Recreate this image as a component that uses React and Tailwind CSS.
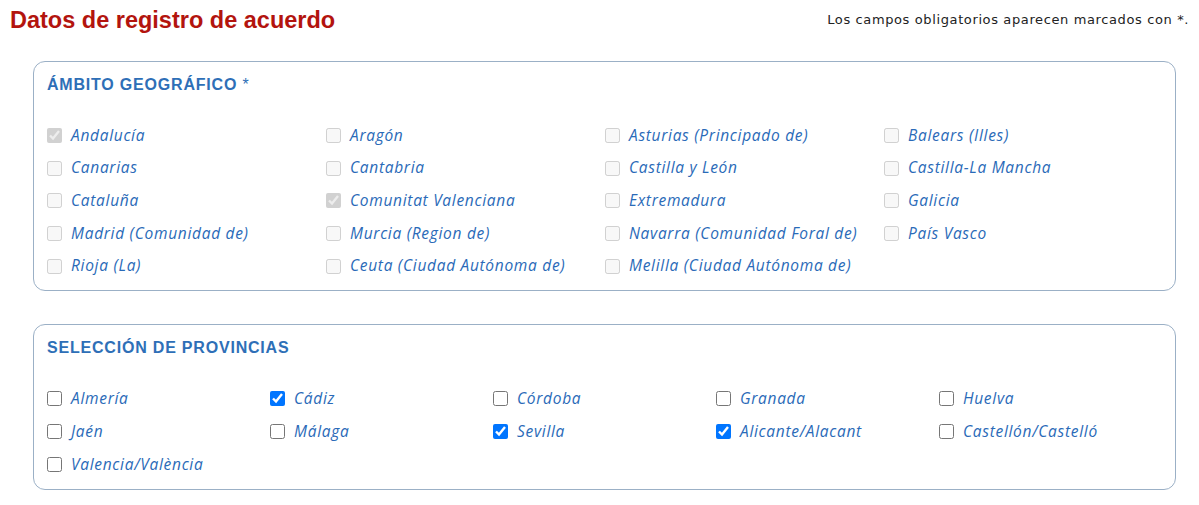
const comunidades = [
  { name: 'Andalucía', checked: true },
  { name: 'Aragón' },
  { name: 'Asturias (Principado de)' },
  { name: 'Balears (Illes)' },
  { name: 'Canarias' },
  { name: 'Cantabria' },
  { name: 'Castilla y León' },
  { name: 'Castilla-La Mancha' },
  { name: 'Cataluña' },
  { name: 'Comunitat Valenciana', checked: true },
  { name: 'Extremadura' },
  { name: 'Galicia' },
  { name: 'Madrid (Comunidad de)' },
  { name: 'Murcia (Region de)' },
  { name: 'Navarra (Comunidad Foral de)' },
  { name: 'País Vasco' },
  { name: 'Rioja (La)' },
  { name: 'Ceuta (Ciudad Autónoma de)' },
  { name: 'Melilla (Ciudad Autónoma de)' },
];

const provincias = [
  { name: 'Almería' },
  { name: 'Cádiz', checked: true },
  { name: 'Córdoba' },
  { name: 'Granada' },
  { name: 'Huelva' },
  { name: 'Jaén' },
  { name: 'Málaga' },
  { name: 'Sevilla', checked: true },
  { name: 'Alicante/Alacant', checked: true },
  { name: 'Castellón/Castelló' },
  { name: 'Valencia/València' },
];

const CheckItem = ({ item, disabled }) => (
  <label className="flex items-center gap-[9px] h-[32.7px]">
    <input
      type="checkbox"
      defaultChecked={!!item.checked}
      disabled={disabled}
      className="m-0 w-[15px] h-[15px] accent-[#0075ff]"
    />
    <span className="italic text-[15.5px] tracking-[0.7px] text-[#2a6ab8] font-['Open_Sans',sans-serif]">
      {item.name}
    </span>
  </label>
);

const Panel = ({ title, required, children }) => (
  <fieldset className="border border-[#9bb0c6] rounded-[12px] px-[13px] pt-[11px] pb-[8px]">
    <h3 className="text-[16px] font-bold text-[#2e6fb7] uppercase tracking-[0.8px] font-['Liberation_Sans',Arial,sans-serif] mb-[22px]">
      {title}
      {required && <span className="font-normal"> *</span>}
    </h3>
    {children}
  </fieldset>
);

export default function App() {
  return (
    <div className="w-[1199px] bg-white pl-[10px] pr-[23px] pt-[5px]">
      <div className="flex items-start justify-between">
        <h1 className="text-[23.5px] font-bold text-[#b3140e] font-['Liberation_Sans',Arial,sans-serif] leading-[30px]">
          Datos de registro de acuerdo
        </h1>
        <p className="text-[13px] tracking-[0.62px] text-[#222] font-['DejaVu_Sans',sans-serif] mt-[5px] -mr-[13px]">
          Los campos obligatorios aparecen marcados con *.
        </p>
      </div>

      <div className="ml-[23px] mt-[26px] flex flex-col gap-[33px]">
        <Panel title="Ámbito geográfico" required>
          <div className="grid grid-cols-[279px_279px_279px_1fr]">
            {comunidades.map((c) => (
              <CheckItem key={c.name} item={c} disabled />
            ))}
          </div>
        </Panel>

        <Panel title="Selección de provincias">
          <div className="grid grid-cols-[223px_223px_223px_223px_1fr]">
            {provincias.map((p) => (
              <CheckItem key={p.name} item={p} />
            ))}
          </div>
        </Panel>
      </div>
    </div>
  );
}
